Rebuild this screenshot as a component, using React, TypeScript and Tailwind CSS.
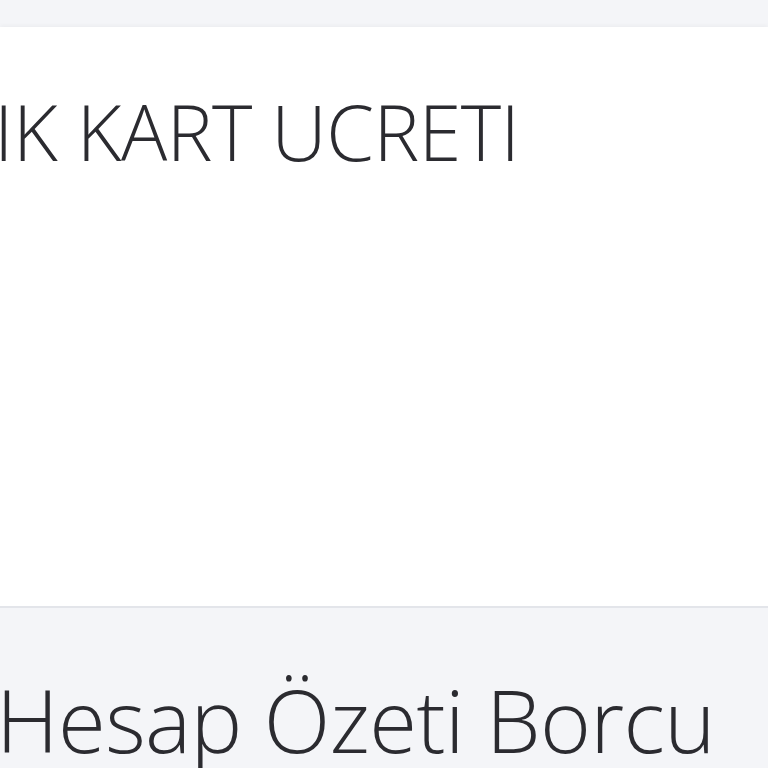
import React from 'react';

export default function App() {
  return (
    <div className="h-[768px] w-[768px] overflow-hidden bg-[#f4f5f8] font-['Open_Sans',sans-serif] text-[#2b2b30]">
      <div className="h-[27px] bg-[#f4f5f8]" />

      {/* panel */}
      <div className="h-[581px] border-b-2 border-[#e3e5ea] bg-white pt-[66px] shadow-[0_-2px_4px_rgba(0,0,0,0.03)]">
        <div className="ml-[-6px] whitespace-nowrap text-[77px] font-light leading-none tracking-[-0.5px]">
          IK KART UCRETI
        </div>
      </div>

      {/* next row */}
      <div className="pt-[68px]">
        <div className="ml-[-4px] whitespace-nowrap text-[87px] font-light leading-none tracking-[-0.6px]">
          Hesap Özeti Borcu
        </div>
      </div>
    </div>
  );
}
